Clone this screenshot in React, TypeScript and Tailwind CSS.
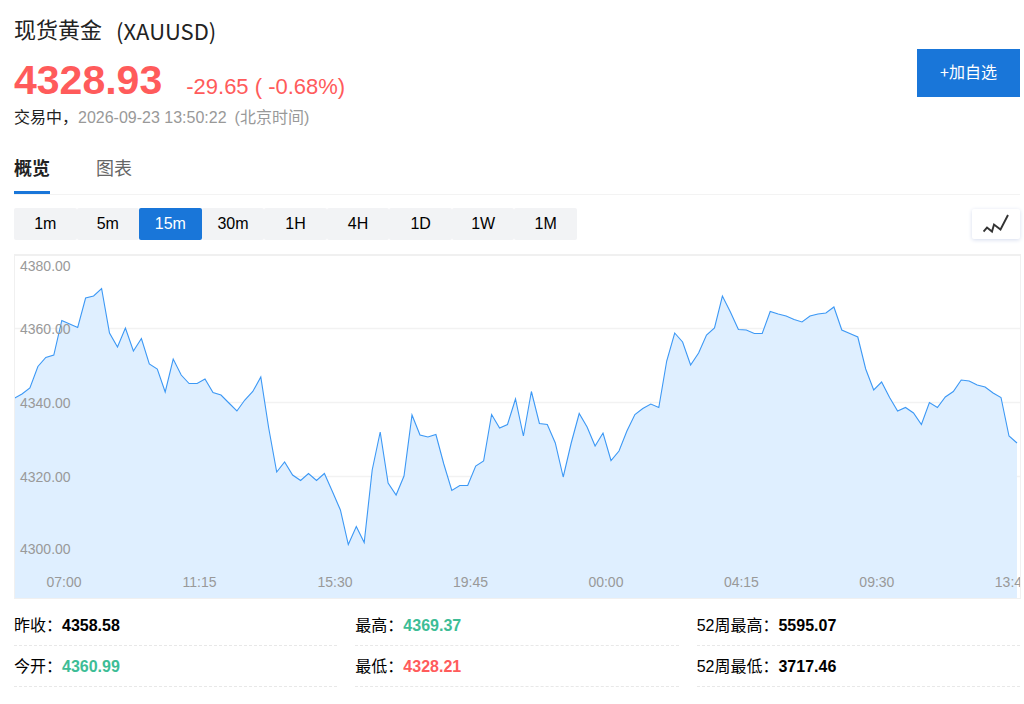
import { useState } from "react";

const TABS = ["概览", "图表"];
const INTERVALS = ["1m", "5m", "15m", "30m", "1H", "4H", "1D", "1W", "1M"];

const CHART_WIDTH = 1006;
const CHART_HEIGHT = 345;
const STEP = 7.96;

// Vertical position of each 15 minute close, measured from the chart's top
const SERIES = [
  144.5, 140, 134, 112.5, 103.5, 101, 66.5, 70, 73.5, 44, 42, 34.5, 79, 93, 74, 97,
  84.5, 110, 115, 138, 105, 121, 129.5, 129.5, 125, 138.5, 141, 149, 157, 146, 137.5, 123,
  174, 218, 208, 221, 226.5, 219.5, 226.5, 219.5, 237.5, 256, 290.5, 272.5, 288.5, 216, 178, 229,
  241, 222, 161, 181, 183, 180.5, 210, 236.5, 231.5, 231.5, 212, 207, 160.5, 174, 170.5, 145,
  182, 137.5, 169.5, 170.5, 189, 223, 189, 159.5, 173, 192, 179, 206.5, 197, 177, 160.5, 154.5,
  150, 153.5, 107, 79, 88, 111, 99, 81, 74, 42, 58, 75.5, 76, 79.5, 79.5, 57.5,
  60, 62, 65.5, 68, 62, 60, 59, 53, 76, 79.5, 83, 115, 136, 128, 143.5, 157,
  153.5, 159, 170.5, 148.5, 153.5, 143, 137.5, 126, 127, 131, 133, 139, 143.5, 182, 189,
];

const PRICE_LABELS = [
  { text: "4380.00", y: 15 },
  { text: "4360.00", y: 78 },
  { text: "4340.00", y: 152 },
  { text: "4320.00", y: 226 },
  { text: "4300.00", y: 298 },
];

const TIME_LABELS = ["07:00", "11:15", "15:30", "19:45", "00:00", "04:15", "09:30", "13:45"];

const STATS = [
  { label: "昨收：", value: "4358.58", color: "text-black" },
  { label: "最高：", value: "4369.37", color: "text-[#3dbd96]" },
  { label: "52周最高：", value: "5595.07", color: "text-black" },
  { label: "今开：", value: "4360.99", color: "text-[#3dbd96]" },
  { label: "最低：", value: "4328.21", color: "text-[#ff5b5b]" },
  { label: "52周最低：", value: "3717.46", color: "text-black" },
];

function PriceChart() {
  const line = SERIES.map((y, i) => `${(i * STEP).toFixed(1)},${y}`).join(" ");
  const lastX = (SERIES.length - 1) * STEP;

  return (
    <div className="mt-3.5 -mr-px border border-t-2 border-[#f0f0f0]">
      <svg className="block w-full h-[342px]" role="img" aria-label="现货黄金">
        <svg
          width="100%"
          height="100%"
          viewBox={`1 2 ${CHART_WIDTH - 1} ${CHART_HEIGHT - 3}`}
          preserveAspectRatio="none"
        >
          {[74.5, 148.5, 222.5].map((y) => (
            <line key={y} x1="0" x2={CHART_WIDTH} y1={y} y2={y} stroke="#f2f2f2" strokeWidth="1.5" />
          ))}
          <polygon points={`0,${CHART_HEIGHT} ${line} ${lastX},${CHART_HEIGHT}`} fill="#dfefff" />
          <polyline
            points={line}
            fill="none"
            stroke="#3c98f5"
            strokeWidth="1.1"
            vectorEffect="non-scaling-stroke"
          />
        </svg>
        <g fill="#999999" fontSize="14">
          {PRICE_LABELS.map((label) => (
            <text key={label.text} x="5" y={label.y}>
              {label.text}
            </text>
          ))}
        </g>
        <g fill="#999999" fontSize="14" textAnchor="middle">
          {TIME_LABELS.map((label, i) => (
            <text key={label} x={`${(4.88 + i * 13.48).toFixed(2)}%`} y="331">
              {label}
            </text>
          ))}
        </g>
      </svg>
    </div>
  );
}

export default function App() {
  const [tab, setTab] = useState("概览");
  const [interval, setInterval] = useState("15m");

  return (
    <main className="min-h-screen bg-white pl-3.5 pr-1 pt-2.5 text-base text-black font-['Liberation_Sans','Noto_Sans_CJK_SC',sans-serif]">
      {/* Quote */}
      <header className="flex items-center justify-between">
        <div>
          <h1 className="flex gap-3.5 text-[22px] leading-9 text-[#222222] font-['Noto_Sans_CJK_SC',sans-serif]">
            <span>现货黄金</span>
            <span className="pt-0.5">(XAUUSD)</span>
          </h1>
          <div className="mt-1.5 flex items-baseline gap-6 text-[#ff5b5b]">
            <strong className="text-[41px] leading-[52px]">4328.93</strong>
            <span className="text-[22px] leading-none">-29.65 ( -0.68%)</span>
          </div>
          <p className="leading-6 text-[#999999]">
            <span className="text-[#222222]">交易中，</span>
            <time>2026-09-23 13:50:22</time>
            <span className="ml-2">(北京时间)</span>
          </p>
        </div>
        <button className="mt-1.5 h-12 w-[103px] bg-[#1976d9] pb-1 text-white cursor-pointer font-['Noto_Sans_CJK_SC',sans-serif]">
          +加自选
        </button>
      </header>

      {/* Tabs */}
      <nav className="mt-[13px] flex gap-[46px] border-b border-[#f3f3f3] text-lg">
        {TABS.map((name) => (
          <button
            key={name}
            onClick={() => setTab(name)}
            className={`h-[51px] border-b-3 pt-1 cursor-pointer ${
              tab === name
                ? "border-[#1976d9] font-bold text-[#222222]"
                : "border-transparent text-[#666666]"
            }`}
          >
            {name}
          </button>
        ))}
      </nav>

      {/* Intervals */}
      <div className="mt-[13px] flex items-center justify-between">
        <div className="grid w-[563px] grid-cols-9">
          {INTERVALS.map((name) => (
            <button
              key={name}
              onClick={() => setInterval(name)}
              className={`h-8 rounded-xs cursor-pointer ${
                interval === name ? "bg-[#1976d9] text-white" : "bg-[#f2f3f5]"
              }`}
            >
              {name}
            </button>
          ))}
        </div>
        <button
          aria-label="图表"
          className="flex h-[30px] w-12 items-center justify-center rounded-xs bg-white shadow-[0_1px_4px_#d5dcee] cursor-pointer"
        >
          <svg width="26" height="20" viewBox="0 0 26 20" fill="none" stroke="#333333" strokeWidth="1.9">
            <path d="M0.5 17.5L4 13.5L9 17.5L11 10.5L17.5 15.5L25 1" />
          </svg>
        </button>
      </div>

      <PriceChart />

      {/* Key figures */}
      <dl className="mt-1.5 grid grid-cols-3 gap-x-[18px]">
        {STATS.map((stat) => (
          <div
            key={stat.label}
            className="flex h-[41px] items-center border-b border-dashed border-[#e8e8e8] pt-0.5"
          >
            <dt>{stat.label}</dt>
            <dd className={`font-bold ${stat.color}`}>{stat.value}</dd>
          </div>
        ))}
      </dl>
    </main>
  );
}
